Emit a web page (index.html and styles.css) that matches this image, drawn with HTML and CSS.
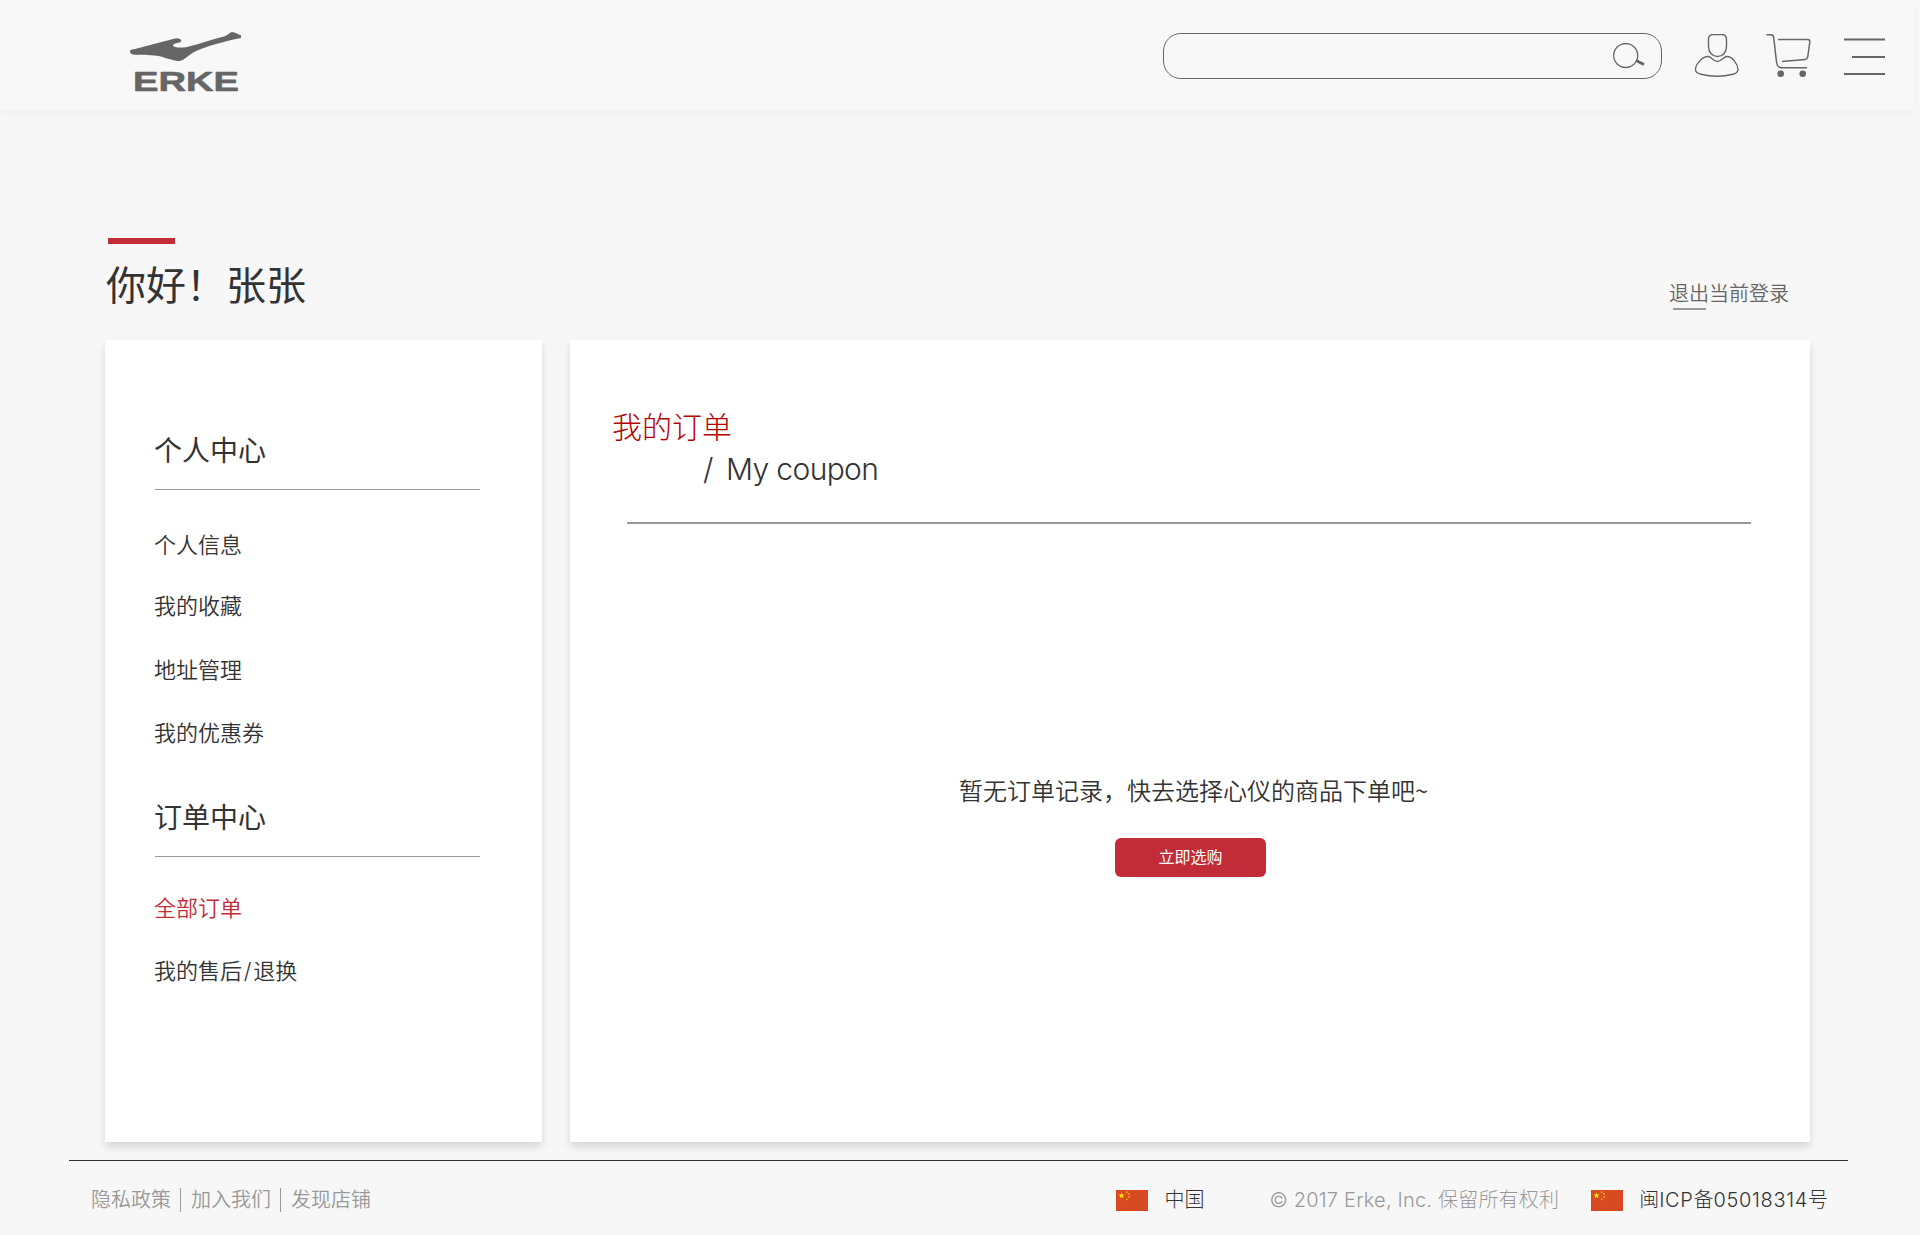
FILE: index.html
```html
<!DOCTYPE html>
<html lang="zh-CN">
<head>
<meta charset="utf-8">
<title>我的订单 - ERKE</title>
<link rel="stylesheet" href="styles.css">
</head>
<body>
<svg class="defs" width="0" height="0">
  <symbol id="flag-cn" viewBox="0 0 32 21">
    <rect width="32" height="21" fill="#d84a22"/>
    <path fill="#ffe600" d="M5.500 2.400l.8 2.200h2.300L6.800 6l.7 2.300-2-1.400-2 1.400L4.200 6 2.400 4.600h2.300z"/>
    <g fill="#f2b50c"><circle cx="10.800" cy="2.200" r=".9"/><circle cx="13" cy="4" r=".9"/><circle cx="13" cy="7" r=".9"/><circle cx="10.800" cy="9.300" r=".9"/></g>
  </symbol>
</svg>
<header class="header">
  <a class="logo">
    <svg width="112" height="70" viewBox="0 0 112 70" fill="#666">
      <path d="M0 19.500C0 17.500 2 17.800 5 17L44 6.800C47 5.600 51 6 51.300 8.800C51.500 11.500 44 10.500 43 13.300C43.500 16 52 16 57 15C70 11.800 81 7.500 94 4.500C98 3.200 99.500 .6 102 0C105 0 108 2.500 111 3.300V6C94 9.500 77 14 64 20C59 23 54.500 27.800 50.500 28.700C45 30 35 25 27 23.700C19 22.500 10 23.300 4 22.700C1.500 22.200 0 21.500 0 19.500Z"/>
      <text class="wordmark" x="3" y="58.600" textLength="106" lengthAdjust="spacingAndGlyphs">ERKE</text>
    </svg>
  </a>
  <div class="tools">
    <div class="search">
      <svg width="32" height="26" viewBox="0 0 32 26" fill="none" stroke="#666"><circle cx="12.700" cy="12.500" r="12" stroke-width="1.300"/><path d="M23 17.500L31 21.500" stroke-width="2.800"/></svg>
    </div>
    <svg class="user" width="46" height="44" viewBox="0 0 46 44" fill="none" stroke="#666" stroke-width="1.400">
      <path d="M19.500 .5H27.500Q32.500 .5 32.500 5.500V12.500C32.500 18.500 28.500 22.500 23.500 22.500S14.500 18.500 14.500 12.500V5.500Q14.500 .5 19.500 .5Z"/>
      <path d="M14 22.500C17.500 22.500 19 27.500 23.300 27.500S29.500 22.500 33 22.500C38.500 22.500 44 30.500 44 35.500C44 38.500 42 39.500 39 40.300C29 42.800 17 42.800 7 40.300C3.500 39.500 1.500 38.500 1.500 35.500C1.500 30.500 8 22.500 14 22.500Z"/>
    </svg>
    <svg class="cart" width="45" height="44" viewBox="0 0 45 44" fill="none" stroke="#666" stroke-width="1.500">
      <path d="M.5 .8H5Q7.500 .8 7.800 4L10.500 28Q11.200 33.700 15.500 33.700H41"/>
      <path d="M12 5.500H41.500Q44 5.500 43.800 8L41.800 22.500Q41.400 25.300 39 25.500L16 27.500"/>
      <g fill="#666" stroke="none"><circle cx="14.700" cy="39.700" r="3.300"/><circle cx="36.700" cy="39.700" r="3.300"/></g>
    </svg>
    <svg class="menu" width="41" height="38" viewBox="0 0 41 38" stroke="#666" stroke-width="2"><path d="M0 1.500H41M8 19H41M0 36H41"/></svg>
  </div>
</header>

<main class="main">
  <div class="intro">
    <h1 class="greeting">你好！张张</h1>
    <a class="logout">退出当前登录</a>
  </div>
  <div class="cards">
    <aside class="card sidebar">
      <h2 class="group">个人中心</h2>
      <nav class="links">
        <a>个人信息</a>
        <a>我的收藏</a>
        <a>地址管理</a>
        <a>我的优惠券</a>
      </nav>
      <h2 class="group">订单中心</h2>
      <nav class="links orders">
        <a class="active">全部订单</a>
        <a>我的售后<span class="slash">/</span>退换</a>
      </nav>
    </aside>
    <section class="card content">
      <h2 class="title">我的订单</h2>
      <p class="subtitle"><span>/</span> My coupon</p>
      <div class="rule"></div>
      <div class="empty">
        <p class="message">暂无订单记录，快去选择心仪的商品下单吧~</p>
        <a class="button">立即选购</a>
      </div>
    </section>
  </div>
</main>

<footer class="footer">
  <nav class="policy"><a>隐私政策</a><a>加入我们</a><a>发现店铺</a></nav>
  <div class="legal">
    <svg class="flag" width="32" height="21"><use href="#flag-cn"/></svg>
    <span class="country">中国</span>
    <span class="copyright">© 2017 Erke, Inc. 保留所有权利</span>
    <svg class="flag" width="32" height="21"><use href="#flag-cn"/></svg>
    <span class="icp">闽<span class="code">ICP</span>备<span class="code">05018314</span>号</span>
  </div>
</footer>
</body>
</html>
```
FILE: styles.css
```css
* { box-sizing: border-box; margin: 0; padding: 0; }
body {
  width: 1920px;
  height: 1235px;
  background: #f7f7f7;
  color: #333;
  font-family: Inter, "Noto Sans CJK SC", sans-serif;
  font-weight: 300;
  overflow: hidden;
}
.defs { display: block; }
svg { display: block; flex: none; }

.header {
  display: flex;
  justify-content: space-between;
  width: 1914px;
  height: 110px;
  padding: 32px 29px 0 130px;
  background: #f8f8f8;
  box-shadow: 0 5px 5px rgba(0, 0, 0, .022);
}
.wordmark {
  font: bold 28px "Liberation Sans", sans-serif;
  stroke: #666;
  stroke-width: .6px;
  stroke-linejoin: round;
}
.tools { display: flex; align-items: flex-start; }
.search {
  display: flex;
  justify-content: flex-end;
  width: 499px;
  height: 46px;
  margin-top: 1px;
  padding: 9px 16px 0 0;
  border: 1px solid #666;
  border-radius: 18px;
}
.user { margin: 2px 0 0 32px; }
.cart { margin: 2px 0 0 26px; }
.menu { margin: 6px 0 0 33px; }

.main { padding: 128px 110px 0 105px; }
.intro {
  display: flex;
  justify-content: space-between;
  height: 102px;
  padding: 0 21px 0 1px;
}
.greeting {
  font-size: 40px;
  font-weight: 400;
  line-height: 60px;
}
.greeting::before {
  content: "";
  display: block;
  width: 67px;
  height: 6px;
  margin: 0 0 12px 2px;
  background: #c12c38;
}
.logout {
  margin-top: 42px;
  color: #666;
  font-size: 20px;
  font-weight: 350;
  line-height: 28px;
}
.logout::after {
  content: "";
  display: block;
  width: 33px;
  height: 2px;
  margin-left: 4px;
  background: #999;
}
.cards { display: flex; gap: 28px; }
.card {
  height: 802px;
  background: #fff;
  box-shadow: 0 5px 8px rgba(0, 0, 0, .13);
}
.sidebar { width: 437px; padding: 90px 62px 0 50px; }
.group {
  height: 60px;
  border-bottom: 1px solid #999;
  font-size: 28px;
  font-weight: 400;
  line-height: 42px;
  text-indent: -1px;
}
.links {
  display: flex;
  flex-direction: column;
  gap: 31px;
  height: 307px;
  padding-top: 39px;
}
.links a {
  font-size: 22px;
  font-weight: 350;
  line-height: 32px;
  text-indent: -1px;
}
.links a:nth-child(2) { margin: -2px 0 1px; }
.orders { padding-top: 35px; }
.orders a:nth-child(2) { margin: 0; }
.links .active { color: #c12c38; }
.slash { padding: 0 1.8px; }
.content { width: 1240px; padding: 65px 59px 0 42px; }
.title { color: #b30000; font-size: 30px; font-weight: 300; line-height: 44px; }
.subtitle {
  padding-left: 91px;
  font-size: 30px;
  letter-spacing: -.65px;
  line-height: 40px;
}
.subtitle span { margin-right: 5.500px; }
.rule { height: 2px; margin: 33px 0 0 15px; background: #999; }
.empty { display: flex; flex-direction: column; align-items: center; padding-top: 248px; }
.message {
  padding-left: 24px;
  font-family: "Noto Sans CJK SC", sans-serif;
  font-size: 24px;
  font-weight: 350;
  line-height: 36px;
}
.button {
  width: 151px;
  height: 39px;
  margin: 30px 0 0 18px;
  border-radius: 6px;
  background: #c12c38;
  color: #fff;
  font-size: 16px;
  font-weight: 400;
  line-height: 39px;
  text-align: center;
}

.footer {
  display: flex;
  justify-content: space-between;
  width: 1779px;
  margin: 18px 0 0 69px;
  padding: 27px 20px 0 22px;
  border-top: 1px solid #333;
  font-size: 20px;
  line-height: 24px;
}
.policy { display: flex; color: #999; font-weight: 350; }
.policy a + a { margin-left: 9px; padding-left: 10px; border-left: 1px solid #999; }
.legal { display: flex; align-items: center; height: 24px; }
.country { margin-left: 16px; }
.copyright { margin-left: 65px; color: #999; letter-spacing: .2px; }
.copyright + .flag { margin-left: 32px; }
.icp { margin-left: 16px; }
.code { letter-spacing: .65px; }
```
